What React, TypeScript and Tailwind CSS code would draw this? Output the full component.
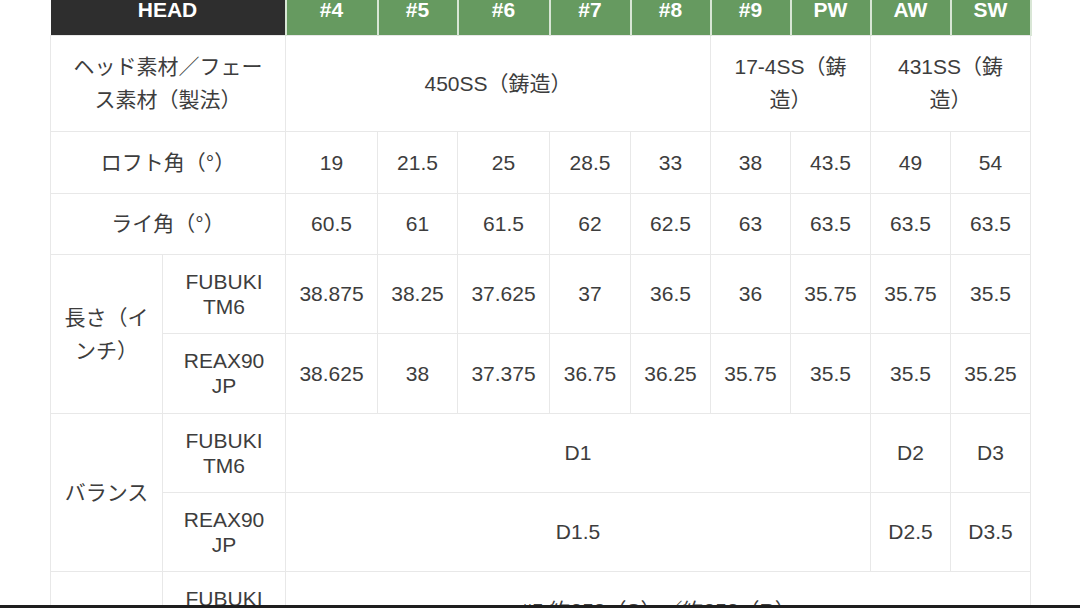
const font = { fontFamily: '"Liberation Sans", "Noto Sans CJK JP", sans-serif' };

const heads = ["#4", "#5", "#6", "#7", "#8", "#9", "PW", "AW", "SW"];
const widths = [112, 123, 92, 80, 92, 81, 80, 80, 80, 80, 80];

const loft = ["19", "21.5", "25", "28.5", "33", "38", "43.5", "49", "54"];
const lie = ["60.5", "61", "61.5", "62", "62.5", "63", "63.5", "63.5", "63.5"];
const lenFubuki = ["38.875", "38.25", "37.625", "37", "36.5", "36", "35.75", "35.75", "35.5"];
const lenReax = ["38.625", "38", "37.375", "36.75", "36.25", "35.75", "35.5", "35.5", "35.25"];

const td = "border border-[#e8e8e8] px-[13px] text-center align-middle";
const latin = "leading-[25px]";
const cjk = "leading-[33px]";

function Values({ items }: { items: string[] }) {
  return (
    <>
      {items.map((v, i) => (
        <td key={i} className={`${td} ${latin}`}>
          {v}
        </td>
      ))}
    </>
  );
}

export default function App() {
  return (
    <div className="min-h-screen bg-white overflow-hidden" style={font}>
      <div className="px-[50px] -mt-[15px]">
        <table className="w-[980px] table-fixed border-collapse text-[21px] text-[#3d3d3d]">
          <colgroup>
            {widths.map((w, i) => (
              <col key={i} style={{ width: w }} />
            ))}
          </colgroup>
          <thead>
            <tr className="h-[50px]">
              <th colSpan={2} className="bg-[#2e2e2e] text-white font-bold border-r border-[#c9dcc6] leading-[25px]">
                HEAD
              </th>
              {heads.map((h) => (
                <th
                  key={h}
                  className="bg-[#669a60] text-white font-bold border-x-2 border-[#d8e6d5] leading-[25px]"
                >
                  {h}
                </th>
              ))}
            </tr>
          </thead>
          <tbody>
            <tr className="h-[96px]">
              <td colSpan={2} className={`${td} ${cjk} px-[16px]`}>
                ヘッド素材／フェース素材（製法）
              </td>
              <td colSpan={5} className={`${td} ${cjk}`}>
                450SS（鋳造）
              </td>
              <td colSpan={2} className={`${td} ${cjk}`}>
                17-4SS（鋳造）
              </td>
              <td colSpan={2} className={`${td} ${cjk}`}>
                431SS（鋳造）
              </td>
            </tr>
            <tr className="h-[62px]">
              <td colSpan={2} className={`${td} ${cjk}`}>
                ロフト角（°）
              </td>
              <Values items={loft} />
            </tr>
            <tr className="h-[61px]">
              <td colSpan={2} className={`${td} ${cjk}`}>
                ライ角（°）
              </td>
              <Values items={lie} />
            </tr>
            <tr className="h-[79px]">
              <td rowSpan={2} className={`${td} ${cjk} px-[8px]`}>
                長さ（インチ）
              </td>
              <td className={`${td} ${latin}`}>FUBUKI TM6</td>
              <Values items={lenFubuki} />
            </tr>
            <tr className="h-[80px]">
              <td className={`${td} ${latin}`}>REAX90 JP</td>
              <Values items={lenReax} />
            </tr>
            <tr className="h-[79px]">
              <td rowSpan={2} className={`${td} ${cjk} px-[8px]`}>
                バランス
              </td>
              <td className={`${td} ${latin}`}>FUBUKI TM6</td>
              <td colSpan={7} className={`${td} ${latin}`}>
                D1
              </td>
              <td className={`${td} ${latin}`}>D2</td>
              <td className={`${td} ${latin}`}>D3</td>
            </tr>
            <tr className="h-[79px]">
              <td className={`${td} ${latin}`}>REAX90 JP</td>
              <td colSpan={7} className={`${td} ${latin}`}>
                D1.5
              </td>
              <td className={`${td} ${latin}`}>D2.5</td>
              <td className={`${td} ${latin}`}>D3.5</td>
            </tr>
            <tr className="h-[79px]">
              <td rowSpan={2} className={`${td} ${cjk} px-[8px]`}>
                重量（g）
              </td>
              <td className={`${td} ${latin}`}>FUBUKI TM6</td>
              <td colSpan={9} className={`${td} ${cjk}`}>
                #5 約358（S）／約358（R）
              </td>
            </tr>
            <tr className="h-[79px]">
              <td className={`${td} ${latin}`}>REAX90 JP</td>
              <td colSpan={9} className={`${td} ${cjk}`}>
                #5 約372（S）／約366（R）
              </td>
            </tr>
          </tbody>
        </table>
      </div>
      <div className="fixed bottom-0 left-0 right-0 h-[3px] bg-[#1e1e1e]" />
    </div>
  );
}
